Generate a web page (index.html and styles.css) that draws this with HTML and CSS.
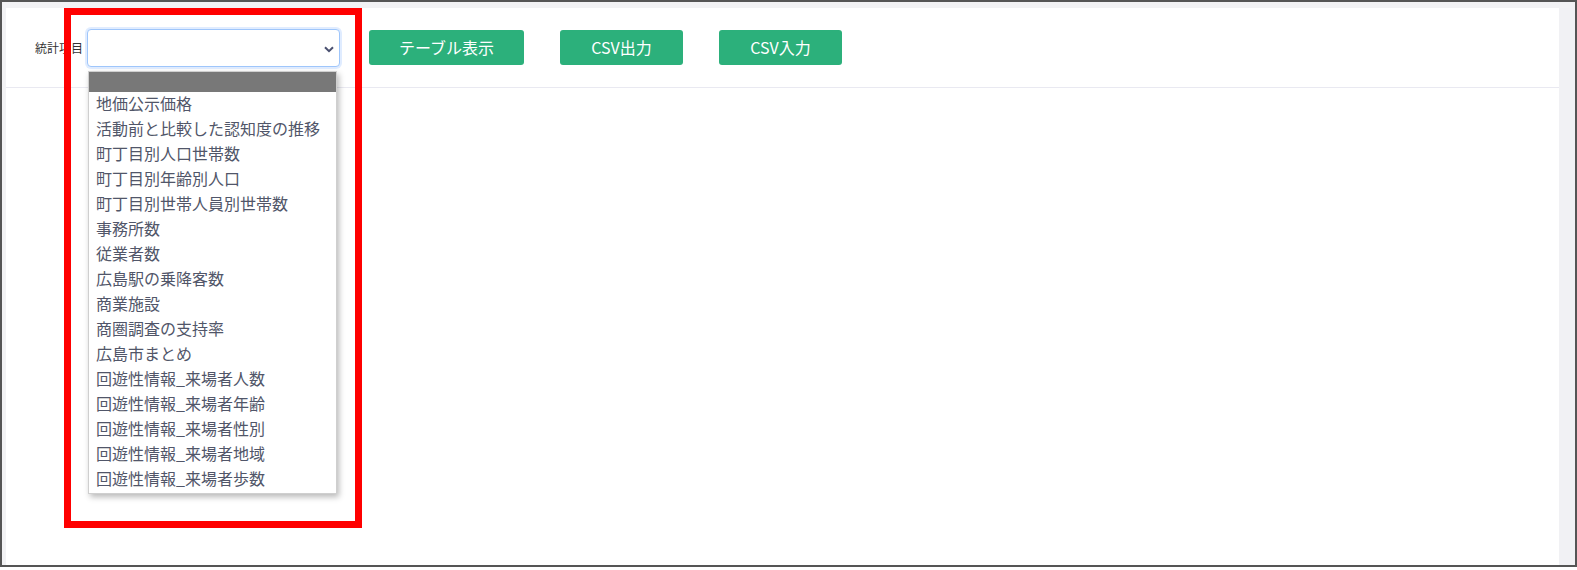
FILE: index.html
```html
<!DOCTYPE html>
<html>
<head>
    <meta charset="utf-8">
    <link rel="stylesheet" href="styles.css">
</head>
<body>
    <div class="frame">
        <div class="main">
            <div class="toolbar">
                <label class="field-label">統計項目</label>
                <div class="select-box">
                    <svg class="chevron" width="10" height="7" viewBox="0 0 10 7">
                        <path d="M1 1.2 L5 5.2 L9 1.2" fill="none" stroke="#4a5070" stroke-width="2"/>
                    </svg>
                    <ul class="options">
                        <li class="option selected"></li>
                        <li class="option">地価公示価格</li>
                        <li class="option">活動前と比較した認知度の推移</li>
                        <li class="option">町丁目別人口世帯数</li>
                        <li class="option">町丁目別年齢別人口</li>
                        <li class="option">町丁目別世帯人員別世帯数</li>
                        <li class="option">事務所数</li>
                        <li class="option">従業者数</li>
                        <li class="option">広島駅の乗降客数</li>
                        <li class="option">商業施設</li>
                        <li class="option">商圏調査の支持率</li>
                        <li class="option">広島市まとめ</li>
                        <li class="option">回遊性情報_来場者人数</li>
                        <li class="option">回遊性情報_来場者年齢</li>
                        <li class="option">回遊性情報_来場者性別</li>
                        <li class="option">回遊性情報_来場者地域</li>
                        <li class="option">回遊性情報_来場者歩数</li>
                    </ul>
                </div>
                <button class="button wide">テーブル表示</button>
                <button class="button">CSV出力</button>
                <button class="button">CSV入力</button>
            </div>
        </div>
        <div class="scroll-track"></div>
    </div>

    <div class="highlight"></div>
</body>
</html>
```

FILE: styles.css
```css
body {
    margin: 0;
    background: #fff;
    font-family: "Noto Sans CJK JP", "Noto Sans", sans-serif;
    position: relative;
}

.frame {
    height: 567px;
    box-sizing: border-box;
    border: 2px solid #555;
    background: #f2f2f4;
    padding: 6px 0 0 4px;
    display: flex;
}

.main {
    flex: 1;
    background: #fff;
}

.scroll-track {
    width: 16px;
    background: #f1f1f4;
}

.toolbar {
    height: 79px;
    border-bottom: 1px solid #e9e9f1;
    display: flex;
    align-items: center;
    padding-left: 29px;
}

.field-label {
    font-size: 12px;
    line-height: 14px;
    color: #333;
    margin-right: 4px;
}

.select-box {
    position: relative;
    width: 253px;
    height: 38px;
    box-sizing: border-box;
    border: 1px solid #9fc6fb;
    border-radius: 4px;
    box-shadow: 0 0 0 2px rgba(13, 110, 253, 0.13);
    background: #fff;
}

.chevron {
    position: absolute;
    right: 5px;
    top: 16px;
}

.options {
    position: absolute;
    left: 0;
    top: 41px;
    width: 247px;
    margin: 0;
    padding: 0 0 1px;
    list-style: none;
    background: #fff;
    border: 1px solid #cfcfcf;
    box-shadow: 2px 3px 6px rgba(0, 0, 0, 0.28);
    z-index: 5;
}

.option {
    height: 25px;
    line-height: 23px;
    padding-left: 7px;
    font-size: 16px;
    color: #515669;
    white-space: nowrap;
}

.option.selected {
    height: 20px;
    background: #787878;
}

.button {
    background: #2cb07b;
    color: #fff;
    border: none;
    border-radius: 3px;
    height: 35px;
    width: 123px;
    padding: 0;
    font-family: "Noto Sans CJK JP", "Noto Sans", sans-serif;
    font-size: 16px;
    line-height: 35px;
    margin-left: 36px;
    cursor: pointer;
}

.button.wide {
    width: 155px;
    margin-left: 29px;
}

.highlight {
    position: absolute;
    left: 64px;
    top: 8px;
    width: 298px;
    height: 520px;
    box-sizing: border-box;
    border: 7px solid #f00;
    z-index: 10;
}
```
